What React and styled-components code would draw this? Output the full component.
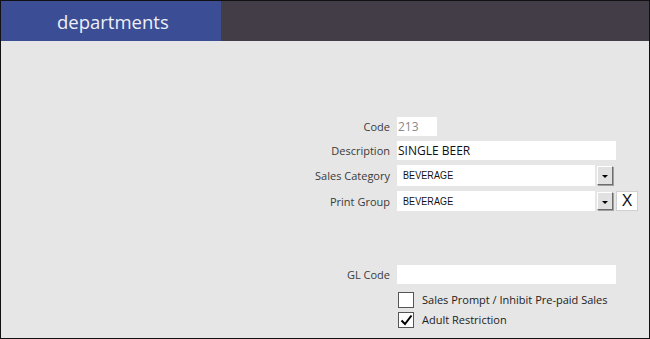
import styled, { createGlobalStyle } from "styled-components";

const GlobalStyle = createGlobalStyle`
  html, body {
    margin: 0;
    padding: 0;
    background: #e6e6e6;
  }
  * {
    box-sizing: border-box;
  }
`;

const Window = styled.div`
  width: 650px;
  height: 339px;
  border: 1px solid #111;
  background: #e6e6e6;
  font-family: "Open Sans", "Noto Sans", sans-serif;
  color: #333;
  overflow: hidden;
`;

const Header = styled.div`
  height: 40px;
  display: flex;
  background: #433d48;
`;

const Tab = styled.div`
  width: 220px;
  background: #3b4d94;
  color: #eef0f7;
  font-size: 18.5px;
  display: flex;
  align-items: center;
  padding-left: 56px;
  padding-top: 1px;
`;

const Form = styled.div`
  display: flex;
  flex-direction: column;
  gap: 5px;
  padding-top: 76px;
`;

const Row = styled.div`
  display: grid;
  grid-template-columns: 389px auto;
  column-gap: 7px;
  align-items: center;
  height: ${(p) => p.h || 19}px;
  margin-top: ${(p) => p.mt || 0}px;
`;

const Label = styled.span`
  text-align: right;
  font-size: 11px;
  color: #3a3a3a;
`;

const Field = styled.div`
  display: flex;
  align-items: center;
  height: ${(p) => p.h || 19}px;
  width: ${(p) => p.w}px;
  background: #fff;
  padding-left: ${(p) => p.pl || 1}px;
  font-size: 12px;
  color: ${(p) => (p.muted ? "#8a8a8a" : "#111")};
  white-space: nowrap;
`;

const ComboText = styled.span`
  font-family: "Liberation Sans", Arial, sans-serif;
  font-size: 10px;
  transform: scaleX(0.9);
  transform-origin: left center;
  letter-spacing: 0.1px;
`;

const Controls = styled.div`
  display: flex;
  align-items: center;
  gap: 2px;
`;

const DropButton = styled.div`
  width: 16px;
  height: ${(p) => p.h || 19}px;
  background: #e1e1e1;
  border: 1px solid;
  border-color: #fff #6d6d6d #6d6d6d #fff;
  box-shadow: 1px 1px 0 #a0a0a0;
  display: flex;
  align-items: center;
  justify-content: center;
  &::after {
    content: "";
    border-left: 3px solid transparent;
    border-right: 3px solid transparent;
    border-top: 3px solid #000;
    margin-top: 2px;
  }
`;

const ClearButton = styled.div`
  width: 22px;
  height: 20px;
  background: #fff;
  border: 1px solid #d0d0d0;
  display: flex;
  align-items: center;
  justify-content: center;
  font-family: "Liberation Sans", Arial, sans-serif;
  font-size: 16px;
  color: #111;
  margin-left: 1px;
`;

const CheckRow = styled.label`
  display: flex;
  align-items: center;
  gap: 8px;
  height: 15px;
  margin-left: 397px;
  margin-top: ${(p) => p.mt || 0}px;
  font-size: 11px;
  color: #222;
`;

const Box = styled.span`
  width: 16px;
  height: 16px;
  background: #fff;
  border: 1px solid #555;
  display: flex;
  align-items: center;
  justify-content: center;
`;

const Check = () => (
  <svg width="13" height="12" viewBox="0 0 13 12">
    <path d="M1.5 6.5 L5 10 L11.5 1.5" fill="none" stroke="#000" strokeWidth="2" />
  </svg>
);

export default function App() {
  return (
    <>
      <GlobalStyle />
      <Window>
        <Header>
          <Tab>departments</Tab>
        </Header>
        <Form>
          <Row>
            <Label>Code</Label>
            <Field w={40} muted>
              213
            </Field>
          </Row>
          <Row>
            <Label>Description</Label>
            <Field w={219}>SINGLE BEER</Field>
          </Row>
          <Row h={21}>
            <Label>Sales Category</Label>
            <Controls>
              <Field w={198} h={21} pl={6}>
                <ComboText>BEVERAGE</ComboText>
              </Field>
              <DropButton h={19} />
            </Controls>
          </Row>
          <Row h={20}>
            <Label>Print Group</Label>
            <Controls>
              <Field w={198} h={20} pl={6}>
                <ComboText>BEVERAGE</ComboText>
              </Field>
              <DropButton h={18} />
              <ClearButton>X</ClearButton>
            </Controls>
          </Row>
          <Row mt={49}>
            <Label>GL Code</Label>
            <Field w={219} />
          </Row>
          <CheckRow mt={3}>
            <Box />
            Sales Prompt / Inhibit Pre-paid Sales
          </CheckRow>
          <CheckRow>
            <Box>
              <Check />
            </Box>
            Adult Restriction
          </CheckRow>
        </Form>
      </Window>
    </>
  );
}
